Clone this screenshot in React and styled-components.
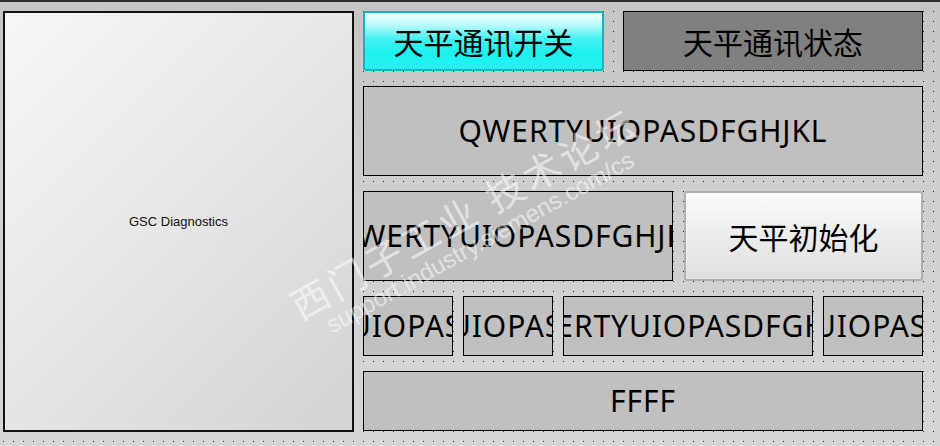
import React from "react";
import styled, { createGlobalStyle } from "styled-components";

const Global = createGlobalStyle`
  html, body { margin: 0; padding: 0; }
  body { width: 940px; height: 446px; overflow: hidden; font-family: "Noto Sans", "Noto Sans CJK SC", sans-serif; }
`;

const Page = styled.div`
  position: relative;
  width: 940px;
  height: 446px;
  display: flex;
  flex-direction: column;
  overflow: hidden;
`;

const TopRule = styled.div`
  height: 2px;
  background: #2e2e2e;
  flex: none;
`;

const Canvas = styled.div`
  flex: 1;
  display: flex;
  align-items: flex-start;
  gap: 9px;
  padding: 9px 0 0 3px;
  background:
    conic-gradient(from 270deg at 1px 1px, #2a2a2a 25%, transparent 0) 3px 9px / 10px 10px,
    linear-gradient(180deg, #c5c5c5 0%, #cfcfcf 45%, #d6d6d6 100%);
`;

const Panel = styled.div`
  box-sizing: border-box;
  width: 351px;
  height: 421px;
  border: 2px solid #111;
  background: linear-gradient(135deg, #f6f6f6 0%, #e6e6e6 50%, #d4d4d4 100%);
  display: flex;
  align-items: center;
  justify-content: center;
  font-family: "Liberation Sans", Arial, sans-serif;
  font-size: 13px;
  color: #111;
`;

const Column = styled.div`
  width: 560px;
  display: flex;
  flex-direction: column;
  gap: 15px;
`;

const Row = styled.div`
  display: grid;
  grid-template-columns: ${(p) => p.$cols};
  column-gap: ${(p) => p.$gap || 10}px;
  justify-content: ${(p) => p.$justify || "start"};
  height: ${(p) => p.$h}px;
`;

const Box = styled.div`
  box-sizing: border-box;
  border: 1px solid #000;
  background: ${(p) => p.$bg || "#c0c0c0"};
  display: flex;
  align-items: center;
  justify-content: center;
  overflow: hidden;
  white-space: nowrap;
  color: #000;
  font-family: ${(p) => (p.$cjk ? `"Noto Sans CJK SC", sans-serif` : `"Noto Sans", sans-serif`)};
  font-size: 30px;
  letter-spacing: ${(p) => (p.$cjk ? 0 : 0.9)}px;
  line-height: 1;
`;

const CyanButton = styled.div`
  box-sizing: border-box;
  border: 2px solid #12b6b6;
  border-radius: 3px;
  background: linear-gradient(180deg, #f6ffff 0%, #b8fafa 22%, #44f2f2 46%, #1ef0f0 70%, #22f2f2 100%);
  display: flex;
  align-items: center;
  justify-content: center;
  font-family: "Noto Sans CJK SC", sans-serif;
  font-size: 30px;
  color: #000;
  white-space: nowrap;
`;

const LightButton = styled.div`
  box-sizing: border-box;
  border: 2px solid #b0b0b0;
  border-radius: 3px;
  background: linear-gradient(180deg, #fbfbfb 0%, #efefef 40%, #e0e0e0 100%);
  display: flex;
  align-items: center;
  justify-content: center;
  font-family: "Noto Sans CJK SC", sans-serif;
  font-size: 30px;
  color: #000;
  white-space: nowrap;
`;

const Watermark = styled.div`
  position: absolute;
  left: 250px;
  top: 190px;
  width: 440px;
  display: flex;
  flex-direction: column;
  align-items: center;
  transform: rotate(-29deg);
  pointer-events: none;
  color: rgba(255, 255, 255, 0.55);
  white-space: nowrap;
`;

const WmCn = styled.div`
  font-family: "Noto Sans CJK SC", sans-serif;
  font-size: 38px;
  letter-spacing: 4px;
  line-height: 1.1;
`;

const WmUrl = styled.div`
  font-family: "Liberation Sans", Arial, sans-serif;
  font-size: 24px;
  line-height: 1.1;
`;

const KEYS = "QWERTYUIOPASDFGHJKL";

export default function App() {
  return (
    <>
      <Global />
      <Page>
        <TopRule />
        <Canvas>
          <Panel>GSC Diagnostics</Panel>
          <Column>
            <Row $h={60} $cols="241px 300px" $justify="space-between">
              <CyanButton>天平通讯开关</CyanButton>
              <Box $bg="#808080" $cjk>天平通讯状态</Box>
            </Row>
            <Row $h={90} $cols="1fr">
              <Box>{KEYS}</Box>
            </Row>
            <Row $h={90} $cols="310px 1fr" $gap={11}>
              <Box>{KEYS}</Box>
              <LightButton>天平初始化</LightButton>
            </Row>
            <Row $h={60} $cols="90px 90px 250px 100px">
              <Box>{KEYS}</Box>
              <Box>{KEYS}</Box>
              <Box>{KEYS}</Box>
              <Box>{KEYS}</Box>
            </Row>
            <Row $h={60} $cols="1fr">
              <Box>FFFF</Box>
            </Row>
          </Column>
        </Canvas>
        <Watermark>
          <WmCn>西门子工业 技术论坛</WmCn>
          <WmUrl>support.industry.siemens.com/cs</WmUrl>
        </Watermark>
      </Page>
    </>
  );
}
